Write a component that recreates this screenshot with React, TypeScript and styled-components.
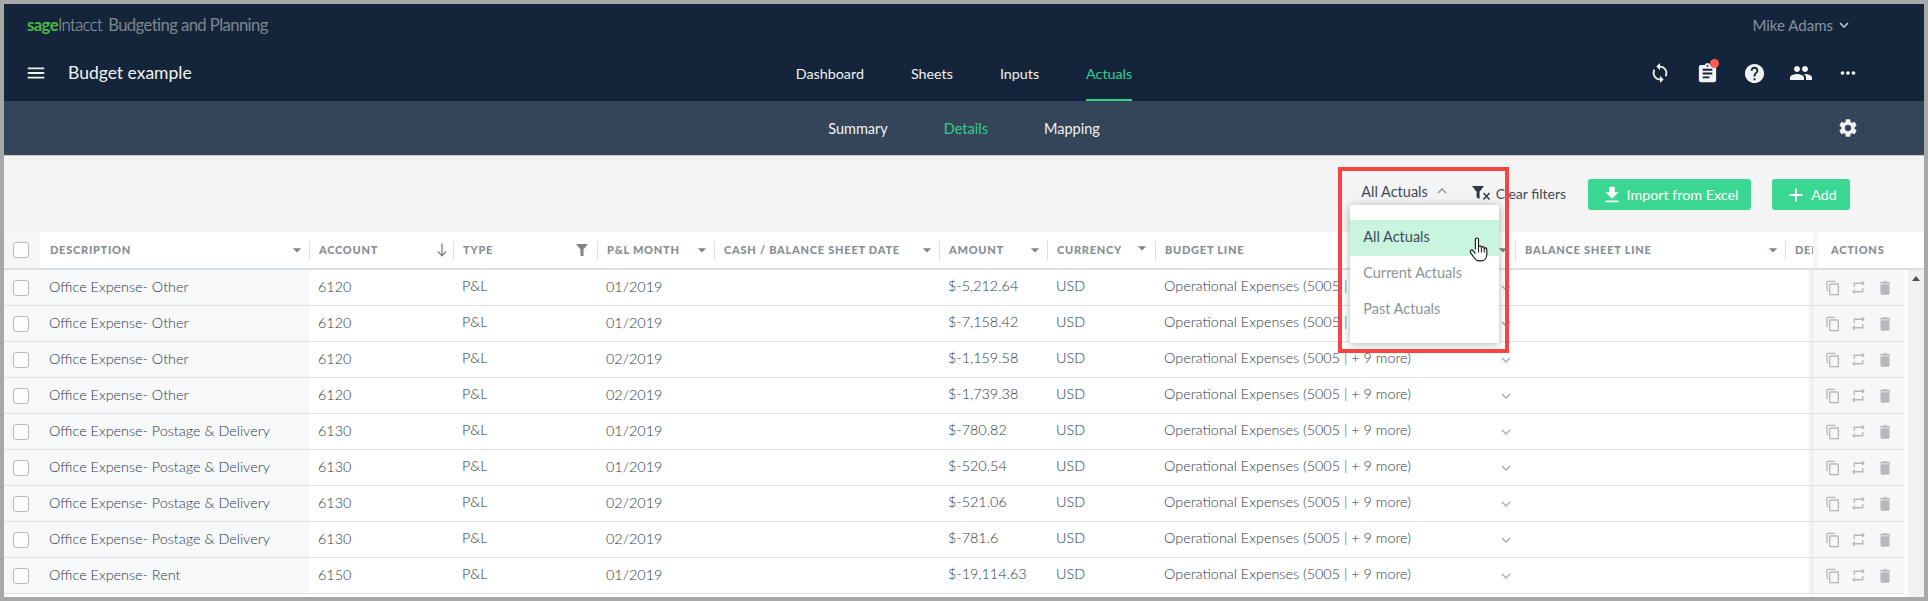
import React from "react";
import styled, { createGlobalStyle } from "styled-components";
import {
  MdAdd,
  MdArrowDropDown,
  MdAssignment,
  MdContentCopy,
  MdDelete,
  MdExpandLess,
  MdExpandMore,
  MdFileDownload,
  MdHelp,
  MdMenu,
  MdMoreHoriz,
  MdPeople,
  MdRepeat,
  MdSettings,
  MdSouth,
  MdSync,
} from "react-icons/md";

const GlobalStyle = createGlobalStyle`
  html, body {
    margin: 0;
    padding: 0;
    background: #a8a8a8;
  }
  * {
    box-sizing: border-box;
  }
`;

const COLUMNS = [
  { key: "description", label: "Description", width: 269, mark: "arrow" },
  { key: "account", label: "Account", width: 144, mark: "sort" },
  { key: "type", label: "Type", width: 144, mark: "filter" },
  { key: "month", label: "P&L Month", width: 117, mark: "arrow" },
  { key: "cash", label: "Cash / Balance Sheet Date", width: 225, mark: "arrow" },
  { key: "amount", label: "Amount", width: 108, mark: "arrow" },
  { key: "currency", label: "Currency", width: 108, mark: "raised" },
  { key: "budget", label: "Budget Line", width: 360, mark: "arrow" },
  { key: "balance", label: "Balance Sheet Line", width: 270, mark: "arrow" },
];

const ROWS = [
  ["Office Expense- Other", "6120", "01/2019", "$-5,212.64"],
  ["Office Expense- Other", "6120", "01/2019", "$-7,158.42"],
  ["Office Expense- Other", "6120", "02/2019", "$-1,159.58"],
  ["Office Expense- Other", "6120", "02/2019", "$-1,739.38"],
  ["Office Expense- Postage & Delivery", "6130", "01/2019", "$-780.82"],
  ["Office Expense- Postage & Delivery", "6130", "01/2019", "$-520.54"],
  ["Office Expense- Postage & Delivery", "6130", "02/2019", "$-521.06"],
  ["Office Expense- Postage & Delivery", "6130", "02/2019", "$-781.6"],
  ["Office Expense- Rent", "6150", "01/2019", "$-19,114.63"],
];

const HandCursor = () => (
  <HandSvg viewBox="0 0 18 25">
    <path
      d="M6 12V2.6C6 1.6 6.7 1 7.5 1S9 1.6 9 2.6V10c0-1 .6-1.5 1.4-1.5s1.3.5 1.4 1.5v.6c.1-.9.7-1.3 1.4-1.3s1.2.5 1.3 1.4v.8c.2-.7.7-1 1.3-1 .7 0 1.2.6 1.2 1.5v4.6c0 3.4-2 6.4-5.6 6.4H9.6c-2.3 0-3.4-1-4.6-2.8L1.4 15c-.6-.9-.4-1.9.3-2.3.8-.5 1.6-.2 2.3.7L6 16"
      fill="#fff"
      stroke="#1a1a1a"
      strokeWidth="1.1"
      strokeLinejoin="round"
    />
    <path d="M9 10v5M11.8 10.6V15M14.5 11.5V15" stroke="#1a1a1a" strokeWidth="1" fill="none" />
  </HandSvg>
);

const ClearFilterIcon = () => (
  <svg width="19" height="14" viewBox="0 0 19 14">
    <path d="M0 0h12L7.6 5.8V13L4.6 11.4V5.8z" fill="#2b3a4a" />
    <path d="M11.5 7l6 6.4M17.5 7l-6 6.4" stroke="#2b3a4a" strokeWidth="1.5" fill="none" />
  </svg>
);

const FunnelIcon = () => (
  <svg width="12" height="12" viewBox="0 0 12 12">
    <path d="M0 0h12L7.5 5.6V12H4.5V5.6z" fill="#7d848c" />
  </svg>
);

const HeaderMark = ({ mark }: { mark: string }) => {
  if (mark === "sort") return <SortMark><MdSouth size={16} /></SortMark>;
  if (mark === "filter") return <FunnelMark><FunnelIcon /></FunnelMark>;
  return (
    <MarkSlot $raised={mark === "raised"}>
      <MdArrowDropDown size={20} color="#7d848c" />
    </MarkSlot>
  );
};

export default function App() {
  return (
    <Frame>
      <GlobalStyle />
      <TopBar>
        <BrandRow>
          <Brand>
            <Sage>sage</Sage>
            <Intacct>Intacct</Intacct>
            <Product>Budgeting and Planning</Product>
          </Brand>
          <UserMenu>
            Mike Adams
            <MdExpandMore size={18} />
          </UserMenu>
        </BrandRow>
        <NavRow>
          <TitleGroup>
            <MdMenu size={22} color="#f2f2f2" />
            <BudgetTitle>Budget example</BudgetTitle>
          </TitleGroup>
          <MainTabs>
            <MainTab>Dashboard</MainTab>
            <MainTab>Sheets</MainTab>
            <MainTab>Inputs</MainTab>
            <MainTab $active>Actuals</MainTab>
          </MainTabs>
          <IconBar>
            <NavIcon><MdSync size={22} /></NavIcon>
            <NavIcon>
              <MdAssignment size={23} />
              <NotifyDot />
            </NavIcon>
            <NavIcon><MdHelp size={23} /></NavIcon>
            <NavIcon><MdPeople size={24} /></NavIcon>
            <NavIcon><MdMoreHoriz size={22} /></NavIcon>
          </IconBar>
        </NavRow>
      </TopBar>
      <SubBar>
        <span />
        <SubTabs>
          <SubTab>Summary</SubTab>
          <SubTab $active>Details</SubTab>
          <SubTab>Mapping</SubTab>
        </SubTabs>
        <SettingsSlot>
          <MdSettings size={22} />
        </SettingsSlot>
      </SubBar>
      <Toolbar>
        <ActualsSelect>
          All Actuals
          <SelectChevron><MdExpandLess size={18} /></SelectChevron>
          <DropMenu>
            <DropItem $selected>All Actuals</DropItem>
            <DropItem>Current Actuals</DropItem>
            <DropItem>Past Actuals</DropItem>
            <HandCursor />
          </DropMenu>
        </ActualsSelect>
        <ClearFilters>
          <ClearFilterIcon />
          Clear filters
        </ClearFilters>
        <GreenButton $width={163}>
          <MdFileDownload size={22} />
          Import from Excel
        </GreenButton>
        <GreenButton $width={78}>
          <MdAdd size={22} />
          Add
        </GreenButton>
      </Toolbar>
      <HeadRow>
        <HeadCheck><CheckBox /></HeadCheck>
        {COLUMNS.map((c) => (
          <HeadCell key={c.key} $width={c.width}>
            <HeadLabel>{c.label}</HeadLabel>
            <HeaderMark mark={c.mark} />
            <HeadSep />
          </HeadCell>
        ))}
        <ClippedHead>Debit</ClippedHead>
        <ActionsHead>Actions</ActionsHead>
      </HeadRow>
      <TableBody>
        <RowList>
          {ROWS.map((r, i) => (
            <Row key={i}>
              <CheckCell><CheckBox /></CheckCell>
              <DescCell>{r[0]}</DescCell>
              <Cell $width={144}>{r[1]}</Cell>
              <Cell $width={144} $lift>P&amp;L</Cell>
              <Cell $width={117}>{r[2]}</Cell>
              <Cell $width={225} />
              <Cell $width={108} $lift>{r[3]}</Cell>
              <Cell $width={108} $lift>USD</Cell>
              <Cell $width={360} $lift>
                Operational Expenses (5005 | + 9 more)
                <RowChevron><MdExpandMore size={18} /></RowChevron>
              </Cell>
              <Cell $width={270} />
              <Cell $width={24} />
              <ActionsCell>
                <MdContentCopy size={16} />
                <MdRepeat size={17} />
                <MdDelete size={18} />
              </ActionsCell>
            </Row>
          ))}
        </RowList>
        <Scrollbar>
          <ScrollArrow />
        </Scrollbar>
      </TableBody>
      <Callout />
    </Frame>
  );
}

const Frame = styled.div`
  position: relative;
  width: 1928px;
  height: 601px;
  border: 4px solid #a8a8a8;
  background: #fff;
  overflow: hidden;
  font-family: Lato, "Liberation Sans", sans-serif;
  color: #3d4a57;
`;

const TopBar = styled.header`
  height: 97px;
  background: #14253b;
`;

const BrandRow = styled.div`
  display: flex;
  justify-content: space-between;
  align-items: center;
  height: 41px;
  padding: 0 71px 0 23px;
`;

const Brand = styled.div`
  display: flex;
  align-items: baseline;
  font-size: 16.7px;
  letter-spacing: -0.6px;
`;

const Sage = styled.span`
  color: #4db848;
  font-weight: 700;
`;

const Intacct = styled.span`
  color: #a6adb5;
  font-weight: 300;
`;

const Product = styled.span`
  color: #7f858c;
  margin-left: 6px;
`;

const UserMenu = styled.div`
  display: flex;
  align-items: center;
  gap: 2px;
  color: #87919d;
  font-size: 15px;
  svg {
    color: #c8ccd1;
  }
`;

const NavRow = styled.div`
  display: grid;
  grid-template-columns: 1fr auto 1fr;
  height: 56px;
`;

const TitleGroup = styled.div`
  display: flex;
  align-items: center;
  gap: 21px;
  padding-left: 21px;
`;

const BudgetTitle = styled.span`
  padding-bottom: 2px;
  color: #f2f2f2;
  font-size: 17.5px;
`;

const MainTabs = styled.nav`
  display: flex;
  gap: 47px;
`;

const MainTab = styled.span<{ $active?: boolean }>`
  display: flex;
  align-items: center;
  padding-top: 2px;
  font-size: 14.3px;
  color: ${(p) => (p.$active ? "#35cf8c" : "#f2f2f2")};
  border-bottom: 2px solid ${(p) => (p.$active ? "#35cf8c" : "transparent")};
`;

const IconBar = styled.div`
  display: flex;
  justify-content: flex-end;
  align-items: center;
  gap: 23px;
  padding-right: 64px;
`;

const NavIcon = styled.span`
  position: relative;
  display: flex;
  justify-content: center;
  width: 24px;
  color: #f2f2f2;
`;

const NotifyDot = styled.i`
  position: absolute;
  top: -3px;
  right: 0;
  width: 9px;
  height: 9px;
  border-radius: 50%;
  background: #ff5a4f;
`;

const SubBar = styled.div`
  display: grid;
  grid-template-columns: 1fr auto 1fr;
  height: 55px;
  background: #344459;
  border-bottom: 1px solid #c9ccd0;
`;

const SubTabs = styled.nav`
  display: flex;
  align-items: center;
  gap: 56px;
`;

const SubTab = styled.span<{ $active?: boolean }>`
  font-size: 14.5px;
  color: ${(p) => (p.$active ? "#35cf8c" : "#f2f2f2")};
`;

const SettingsSlot = styled.div`
  display: flex;
  justify-content: flex-end;
  align-items: center;
  padding-right: 65px;
  color: #f2f2f2;
`;

const Toolbar = styled.div`
  display: flex;
  justify-content: flex-end;
  align-items: flex-start;
  height: 76px;
  padding: 23px 74px 0 0;
  background: #f4f4f4;
`;

const ActualsSelect = styled.div`
  position: relative;
  display: flex;
  align-items: center;
  height: 24px;
  margin-right: 21px;
  font-size: 14.5px;
  color: #3d4a57;
`;

const SelectChevron = styled.span`
  display: flex;
  margin-left: 5px;
  color: #8d949b;
`;

const DropMenu = styled.div`
  position: absolute;
  top: 26px;
  left: -11px;
  z-index: 3;
  width: 149px;
  padding: 15px 0;
  background: #fff;
  box-shadow: 0 1px 8px rgba(0, 0, 0, 0.3);
`;

const DropItem = styled.div<{ $selected?: boolean }>`
  display: flex;
  align-items: center;
  height: 36px;
  padding: 0 0 3px 13px;
  font-size: 14.5px;
  color: ${(p) => (p.$selected ? "#3d4a57" : "#8c939a")};
  background: ${(p) => (p.$selected ? "#c9f5e0" : "transparent")};
`;

const HandSvg = styled.svg`
  position: absolute;
  left: 119px;
  top: 32px;
  width: 19px;
  height: 26px;
`;

const ClearFilters = styled.div`
  display: flex;
  align-items: center;
  gap: 5px;
  height: 28px;
  margin-right: 22px;
  font-size: 14px;
  color: #3d4a57;
`;

const GreenButton = styled.button<{ $width: number }>`
  display: flex;
  justify-content: center;
  align-items: center;
  gap: 4px;
  width: ${(p) => p.$width}px;
  height: 31px;
  border: 0;
  border-radius: 3px;
  background: #3ad793;
  color: #fff;
  font: 14.3px Lato, "Liberation Sans", sans-serif;
  & + & {
    margin-left: 21px;
  }
`;

const HeadRow = styled.div`
  display: flex;
  height: 38px;
  background: #fff;
  border-bottom: 2px solid #dcdfe2;
`;

const HeadCheck = styled.div`
  display: flex;
  align-items: center;
  flex: 0 0 36px;
  padding-left: 9px;
  background: #f5f6f7;
`;

const CheckBox = styled.span`
  display: block;
  width: 16px;
  height: 16px;
  border: 1px solid #b5b9bd;
  border-radius: 3px;
  background: #fdfdfd;
`;

const HeadCell = styled.div<{ $width: number }>`
  display: flex;
  align-items: center;
  flex: 0 0 ${(p) => p.$width}px;
  padding-left: 10px;
`;

const HeadLabel = styled.span`
  flex: 1;
  padding-bottom: 2px;
  font-size: 11px;
  font-weight: 900;
  letter-spacing: 0.75px;
  text-transform: uppercase;
  color: #868d95;
`;

const MarkSlot = styled.span<{ $raised?: boolean }>`
  display: flex;
  justify-content: center;
  width: 20px;
  margin-right: ${(p) => (p.$raised ? "3px" : "2px")};
  margin-top: ${(p) => (p.$raised ? "-5px" : "0")};
`;

const SortMark = styled(MarkSlot)`
  margin-right: 1px;
  color: #7d848c;
`;

const FunnelMark = styled(MarkSlot)`
  margin-right: 5px;
`;

const HeadSep = styled.span`
  flex: 0 0 1px;
  height: 19px;
  margin-right: -1px;
  background: #dcdfe2;
`;

const ClippedHead = styled(HeadLabel)`
  flex: 0 0 28px;
  align-self: center;
  padding-left: 10px;
  overflow: hidden;
  white-space: nowrap;
`;

const ActionsHead = styled(HeadLabel)`
  align-self: stretch;
  display: flex;
  align-items: center;
  flex: 1;
  margin-left: 5px;
  padding-left: 13px;
  box-shadow: -5px 0 0 #f6f6f6;
`;

const TableBody = styled.div`
  display: flex;
  height: 327px;
`;

const RowList = styled.div`
  flex: 0 0 1900px;
`;

const Row = styled.div`
  display: flex;
  height: 36px;
  border-bottom: 1px solid #dfe2e5;
  font-size: 14.4px;
`;

const CheckCell = styled.div`
  display: flex;
  align-items: center;
  flex: 0 0 36px;
  padding-left: 9px;
  background: #f7f8fa;
`;

const Cell = styled.div<{ $width: number; $lift?: boolean }>`
  position: relative;
  display: flex;
  align-items: center;
  flex: 0 0 ${(p) => p.$width}px;
  padding: 0 0 ${(p) => (p.$lift ? "5px" : "2px")} 9px;
  font-weight: 300;
  color: #2c3947;
  white-space: nowrap;
`;

const DescCell = styled(Cell).attrs({ $width: 269 })`
  background: #f7f8fa;
`;

const RowChevron = styled.span`
  position: absolute;
  right: 0;
  top: 9px;
  display: flex;
  color: #a7adb3;
`;

const ActionsCell = styled.div`
  display: flex;
  align-items: center;
  justify-content: space-between;
  flex: 0 0 95px;
  padding: 0 10px 0 11px;
  border-left: 5px solid #f0f0f0;
  background: #f7f7f8;
  color: #b4b8bc;
`;

const Scrollbar = styled.div`
  flex: 0 0 16px;
  margin-left: 4px;
  padding-top: 6px;
  background: #f1f1f1;
`;

const ScrollArrow = styled.div`
  width: 0;
  margin: 0 auto;
  border: 4px solid transparent;
  border-top: 0;
  border-bottom: 5px solid #50504f;
`;

const Callout = styled.div`
  position: absolute;
  left: 1334px;
  top: 163px;
  z-index: 4;
  width: 171px;
  height: 186px;
  border: 4px solid #f84343;
  pointer-events: none;
`;
